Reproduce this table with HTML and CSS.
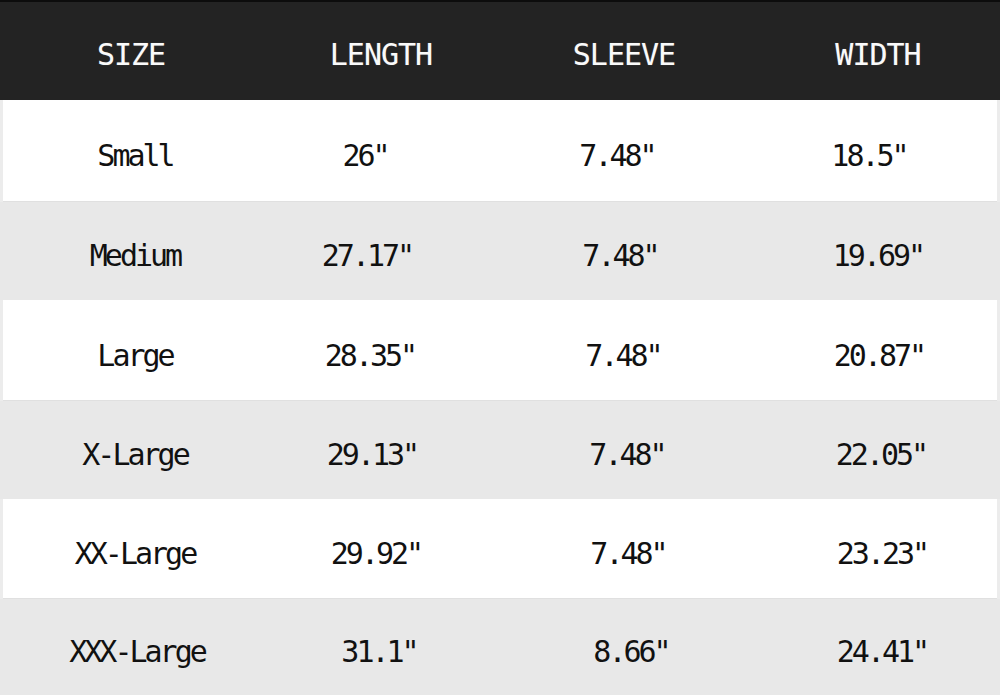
FILE: index.html
```html
<!DOCTYPE html>
<html lang="en">
<head>
<meta charset="utf-8">
<title>Size Chart</title>
<link rel="stylesheet" href="styles.css">
</head>
<body>
<div class="chart">
  <div class="row head">
    <div class="cell c1">SIZE</div>
    <div class="cell c2">LENGTH</div>
    <div class="cell c3">SLEEVE</div>
    <div class="cell c4">WIDTH</div>
  </div>
  <div class="row light r1">
    <div class="cell c1">Small</div>
    <div class="cell c2">26"</div>
    <div class="cell c3">7.48"</div>
    <div class="cell c4">18.5"</div>
  </div>
  <div class="row grey r2">
    <div class="cell c1">Medium</div>
    <div class="cell c2">27.17"</div>
    <div class="cell c3">7.48"</div>
    <div class="cell c4">19.69"</div>
  </div>
  <div class="row light r3">
    <div class="cell c1">Large</div>
    <div class="cell c2">28.35"</div>
    <div class="cell c3">7.48"</div>
    <div class="cell c4">20.87"</div>
  </div>
  <div class="row grey r4">
    <div class="cell c1">X-Large</div>
    <div class="cell c2">29.13"</div>
    <div class="cell c3">7.48"</div>
    <div class="cell c4">22.05"</div>
  </div>
  <div class="row light r5">
    <div class="cell c1">XX-Large</div>
    <div class="cell c2">29.92"</div>
    <div class="cell c3">7.48"</div>
    <div class="cell c4">23.23"</div>
  </div>
  <div class="row grey r6">
    <div class="cell c1">XXX-Large</div>
    <div class="cell c2">31.1"</div>
    <div class="cell c3">8.66"</div>
    <div class="cell c4">24.41"</div>
  </div>
</div>
</body>
</html>
```

FILE: styles.css
```css
html, body {
  margin: 0;
  padding: 0;
  background: #e8e8e8;
}

.chart {
  width: 1000px;
  height: 695px;
  display: grid;
  grid-template-rows: 100px 102px 98px 101px 98px 100px 96px;
  font-family: "DejaVu Sans Mono", "Liberation Mono", monospace;
  font-size: 30px;
  letter-spacing: -3px;
  color: #111;
}

.row {
  display: grid;
  grid-template-columns: 270px 204px 300px 226px;
  align-items: center;
  box-sizing: border-box;
}

.cell {
  text-align: center;
  white-space: nowrap;
  line-height: 1;
  padding-top: 10px;
}

.c4 {
  padding-right: 14px;
}

.head {
  background: #232323;
  border-top: 2px solid #0c0c0c;
  color: #fafafa;
  letter-spacing: -1px;
  text-shadow: 0 0 1px rgba(255,255,255,0.3);
}

.head .cell {
  padding-top: 8px;
}

.head .c1 {
  padding-right: 8px;
}

.head .c2 {
  padding-left: 18px;
}

.head .c4 {
  padding-right: 18px;
}

.light {
  background: #ffffff;
  box-shadow: inset 3px 0 0 #ececec, inset -3px 0 0 #ececec, inset 0 -1px 0 #e0e0e0;
}

.grey {
  background: #e8e8e8;
}

.r1 .c2 { padding-right: 14px; }
.r1 .c3 { padding-right: 14px; }
.r1 .c4 { padding-right: 36px; }
.r2 .c2 { padding-right: 10px; }
.r2 .c3 { padding-right: 8px; }
.r2 .c4 { padding-right: 18px; }
.r3 .c2 { padding-right: 4px; }
.r3 .c3 { padding-right: 2px; }
.r3 .c4 { padding-right: 16px; }
.r4 .c3 { padding-left: 6px; }
.r4 .c4 { padding-right: 12px; }
.r5 .c2 { padding-left: 8px; }
.r5 .c3 { padding-left: 8px; }
.r5 .c4 { padding-right: 10px; }
.r6 .c2 { padding-left: 14px; }
.r6 .c3 { padding-left: 14px; }
.r6 .c4 { padding-right: 10px; }
.r6 .c1 { padding-left: 4px; }
```
